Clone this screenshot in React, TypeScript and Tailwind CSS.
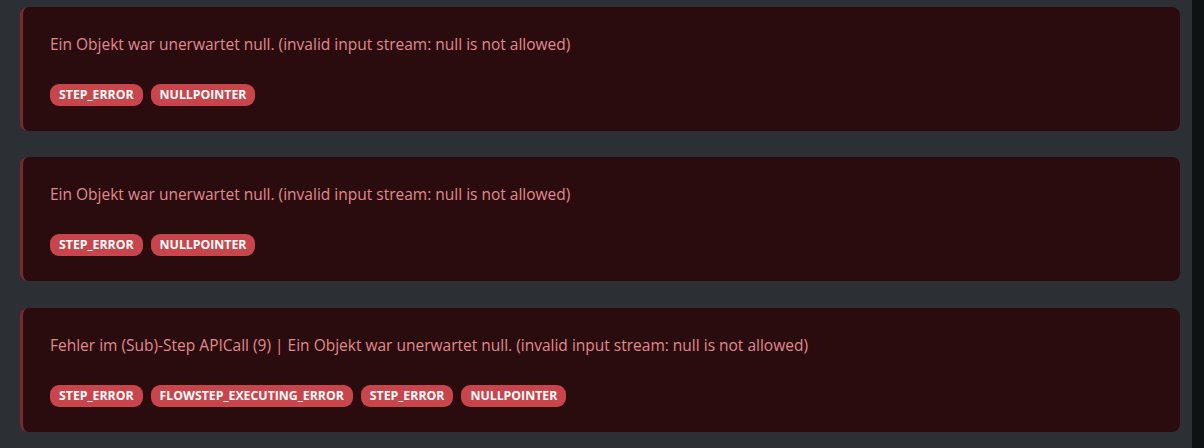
import React from "react";

const cards: { msg: string; tags: string[] }[] = [
  {
    msg: "Ein Objekt war unerwartet null. (invalid input stream: null is not allowed)",
    tags: ["STEP_ERROR", "NULLPOINTER"],
  },
  {
    msg: "Ein Objekt war unerwartet null. (invalid input stream: null is not allowed)",
    tags: ["STEP_ERROR", "NULLPOINTER"],
  },
  {
    msg: "Fehler im (Sub)-Step APICall (9) | Ein Objekt war unerwartet null. (invalid input stream: null is not allowed)",
    tags: ["STEP_ERROR", "FLOWSTEP_EXECUTING_ERROR", "STEP_ERROR", "NULLPOINTER"],
  },
];

export default function App() {
  return (
    <div
      className="flex w-[1204px] h-[448px] overflow-hidden bg-[#2c3035]"
      style={{ fontFamily: "'Open Sans', Lato, sans-serif" }}
    >
      <div className="flex-1 flex flex-col gap-[26.4px] pl-[20px] pr-[12px] pt-[7px]">
        {cards.map((c, i) => (
          <div
            key={i}
            className="h-[124px] shrink-0 rounded-[8px] border-l-[3px] border-[#7a2a2f] bg-[#2a0c0e] pl-[27px] pt-[27px]"
          >
            <div className="text-[15.5px] leading-[20px] text-[#e08a8e]">{c.msg}</div>
            <div className="mt-[30px] flex gap-[8px]">
              {c.tags.map((t, j) => (
                <span
                  key={j}
                  className="h-[22px] rounded-[9px] bg-[#c9454c] px-[9px] text-[12.3px] font-bold leading-[22px] text-white"
                >
                  {t}
                </span>
              ))}
            </div>
          </div>
        ))}
      </div>
      <div className="w-[12px] shrink-0 bg-[#0f1215]" />
    </div>
  );
}
